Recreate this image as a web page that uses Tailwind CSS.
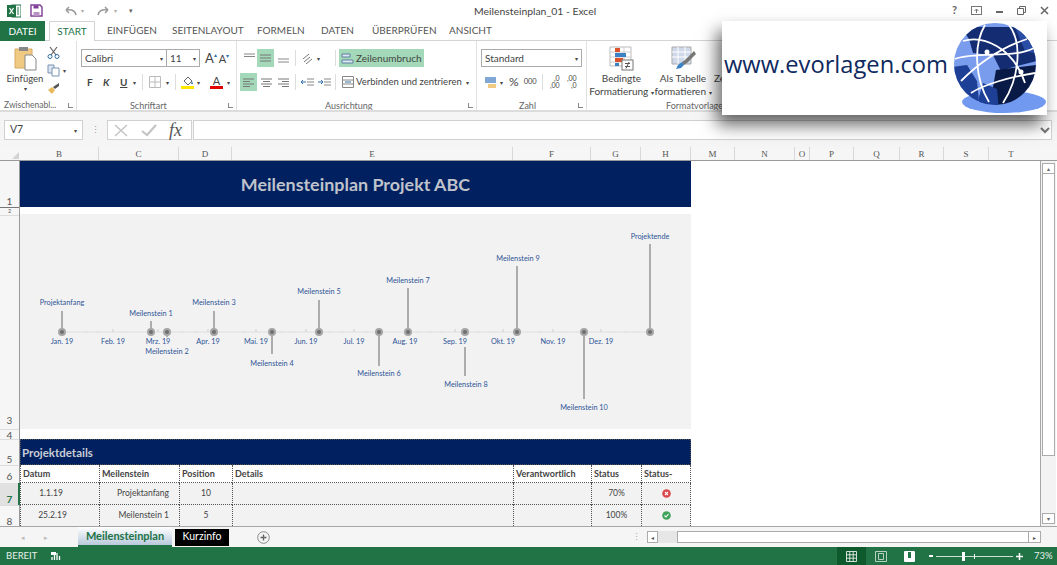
<!DOCTYPE html>
<html lang="de">
<head>
<meta charset="UTF-8">
<title>Meilensteinplan_01 - Excel</title>
<script src="https://cdn.jsdelivr.net/npm/@tailwindcss/browser@4"></script>
</head>
<body class="w-[1057px] h-[565px] overflow-hidden bg-white relative font-['Lato',sans-serif] text-[#444]">

<!-- Titelleiste -->
<div class="h-[21px] flex items-center pl-[7px] relative">
  <svg width="14" height="14" viewBox="0 0 14 14"><rect x="5" y="1" width="9" height="12" fill="#fff" stroke="#217346"/><path d="M8 3v8M11 3v8" stroke="#217346"/><rect y="1" width="9" height="12" fill="#217346"/><path d="M2.500 4l4 6M6.500 4l-4 6" stroke="#fff" stroke-width="1.300"/></svg>
  <svg class="ml-[9px]" width="13" height="13" viewBox="0 0 13 13"><path d="M1 1h9l2 2v9H1z" fill="#fff" stroke="#7d3c98" stroke-width="1.400"/><path d="M3.500 1.500h5v3h-5z" fill="#7d3c98"/><path d="M3.500 8h6v4h-6z" fill="#b894c6"/></svg>
  <svg class="ml-[21px]" width="13" height="12" viewBox="0 0 13 12"><path d="M12 10C11 5 7 4 2 5M2 5l3-3M2 5l3 3" fill="none" stroke="#9a9a9a" stroke-width="1.500"/></svg>
  <span class="ml-[4px] text-[6px] text-[#aaa]">▾</span>
  <svg class="ml-[13px]" width="13" height="12" viewBox="0 0 13 12"><path d="M1 10C2 5 6 4 11 5M11 5L8 2M11 5L8 8" fill="none" stroke="#9a9a9a" stroke-width="1.500"/></svg>
  <span class="ml-[4px] text-[6px] text-[#aaa]">▾</span>
  <span class="ml-[12px] text-[7px] text-[#666] leading-none">▾</span>
  <span class="absolute left-[474px] top-[5px] text-[10.400px] leading-[12px] text-[#444] whitespace-nowrap">Meilensteinplan_01 - Excel</span>
  <div class="ml-auto flex items-center gap-[14px] pr-[8px] text-[#666]">
    <span class="text-[11px] font-bold">?</span>
    <svg width="11" height="9" viewBox="0 0 11 9"><rect x=".5" y=".5" width="10" height="8" fill="none" stroke="#777"/><path d="M5.500 7V3M3.500 5l2-2 2 2" stroke="#777" fill="none"/></svg>
    <span class="w-[7px] h-[2px] bg-[#666] mt-[3px]"></span>
    <svg width="9" height="9" viewBox="0 0 9 9"><path d="M2.500 2.500V.5h6v6h-2M.5 2.500h6v6h-6z" fill="none" stroke="#666"/></svg>
    <svg width="9" height="9" viewBox="0 0 9 9"><path d="M1 1l7 7M8 1L1 8" stroke="#666" stroke-width="1.500"/></svg>
  </div>
</div>

<!-- Registerkarten -->
<div class="h-[20px] flex items-stretch text-[10px] border-b border-[#d4d4d4] whitespace-nowrap">
  <div class="w-[45px] h-[20px] bg-[#217346] text-white flex items-center justify-center">DATEI</div>
  <div class="ml-[4px] w-[46px] h-[20px] bg-white border border-b-0 border-[#d4d4d4] text-[#217346] flex items-center justify-center">START</div>
  <div class="flex items-center ml-[12px] text-[#555]">
    <span class="w-[65px]">EINFÜGEN</span>
    <span class="w-[85px]">SEITENLAYOUT</span>
    <span class="w-[64px]">FORMELN</span>
    <span class="w-[51px]">DATEN</span>
    <span class="w-[77px]">ÜBERPRÜFEN</span>
    <span>ANSICHT</span>
  </div>
</div>

<!-- Menüband -->
<div class="h-[71px] flex border-b-2 border-[#dcdcdc] text-[#444] overflow-hidden">
  <!-- Zwischenablage -->
  <div class="w-[77px] shrink-0 border-r border-[#e1e1e1] flex flex-col">
    <div class="h-[60px] flex">
      <div class="w-[46px] pl-[4px] flex flex-col items-center pt-[5px]">
        <svg width="23" height="25" viewBox="0 0 23 25"><path d="M1 3h17v19H1z" fill="#f0c982" stroke="#d8ac62"/><rect x="5" y="1" width="9" height="4" fill="#888"/><path d="M11 9h7l4 4v11H11z" fill="#fff" stroke="#888"/></svg>
        <span class="text-[9.500px] leading-[13px] mt-[1px]">Einfügen</span>
        <span class="text-[6px] leading-[8px]">▾</span>
      </div>
      <div class="flex flex-col gap-[5px] pt-[5px] pl-[1px]">
        <svg width="13" height="13" viewBox="0 0 13 13"><path d="M3 1l6 8M10 1L4 9" stroke="#666" stroke-width="1.200"/><circle cx="3" cy="10.500" r="2" fill="none" stroke="#2f6fa8"/><circle cx="10" cy="10.500" r="2" fill="none" stroke="#2f6fa8"/></svg>
        <div class="flex items-center gap-[3px]"><svg width="13" height="13" viewBox="0 0 13 13"><path d="M1 1h6v8H1z" fill="#dce6f2" stroke="#7a93b2"/><path d="M5 4h7v8H5z" fill="#fff" stroke="#7a93b2"/></svg><span class="text-[6px]">▾</span></div>
        <svg width="13" height="13" viewBox="0 0 13 13"><path d="M1 8l4 4 3-4-3-3z" fill="#e8b95a"/><path d="M6 5l6-4 0 3-4 3z" fill="#555"/></svg>
      </div>
    </div>
    <div class="flex items-center justify-between pl-[4px] pr-[3px] text-[8.500px] text-[#666] leading-[9px] whitespace-nowrap">Zwischenabl...<span class="w-[5px] h-[5px] border-l border-b border-[#888]"></span></div>
  </div>
  <!-- Schriftart -->
  <div class="w-[160px] shrink-0 border-r border-[#e1e1e1] flex flex-col pl-[4px]">
    <div class="h-[60px] flex flex-col">
      <div class="flex items-center mt-[8px] h-[18px]">
        <div class="w-[86px] h-[18px] border border-[#ababab] flex items-center justify-between px-[3px] text-[10px]">Calibri<span class="text-[6px]">▾</span></div>
        <div class="w-[33px] h-[18px] border border-l-0 border-[#ababab] flex items-center justify-between px-[3px] text-[10px]">11<span class="text-[6px]">▾</span></div>
        <span class="ml-[5px] text-[13px] leading-none">A<span class="text-[6px] align-top text-[#2f6fa8]">▴</span></span>
        <span class="ml-[2px] text-[11px] leading-none">A<span class="text-[6px] align-top text-[#2f6fa8]">▾</span></span>
      </div>
      <div class="flex items-center mt-[6px] h-[18px] text-[10px] font-bold">
        <span class="ml-[6px] w-[16px]">F</span>
        <span class="w-[17px] italic">K</span>
        <span class="w-[13px] underline">U</span>
        <span class="w-[9px] text-[6px] font-normal">▾</span>
        <span class="w-px h-[16px] bg-[#ddd]"></span>
        <svg class="ml-[6px]" width="12" height="12" viewBox="0 0 12 12"><path d="M.5.5h11v11H.5zM6 .5v11M.5 6h11" fill="none" stroke="#bbb"/></svg>
        <span class="ml-[5px] w-[9px] text-[6px] font-normal">▾</span>
        <span class="w-px h-[16px] bg-[#ddd]"></span>
        <div class="ml-[5px] flex flex-col items-center w-[13px]"><svg width="12" height="10" viewBox="0 0 12 10"><path d="M2 5l4-4 4 4-4 4z" fill="#fff" stroke="#666"/><path d="M10 5l1 3-2 0z" fill="#2f6fa8"/></svg><span class="w-[13px] h-[3px] bg-[#ffe600]"></span></div>
        <span class="ml-[3px] w-[13px] text-[6px] font-normal">▾</span>
        <div class="flex flex-col items-center w-[13px] leading-[11px]"><span class="text-[11px] font-normal">A</span><span class="w-[13px] h-[3px] bg-[#e00000]"></span></div>
        <span class="ml-[4px] text-[6px] font-normal">▾</span>
      </div>
    </div>
    <div class="flex items-center justify-between pr-[3px] text-[9px] text-[#666] leading-[9px]"><span class="ml-[49px]">Schriftart</span><span class="w-[5px] h-[5px] border-l border-b border-[#888]"></span></div>
  </div>
  <!-- Ausrichtung -->
  <div class="w-[240px] shrink-0 border-r border-[#e1e1e1] flex flex-col pl-[3px]">
    <div class="h-[60px] flex flex-col">
      <div class="flex items-center mt-[8px] h-[18px]">
        <svg class="ml-[3px] shrink-0" width="13" height="10" viewBox="0 0 13 10"><path d="M1 1h11M1 3.500h11" stroke="#888"/></svg>
        <div class="ml-[1px] w-[17px] h-[18px] bg-[#a3d9b8] flex items-center justify-center"><svg width="13" height="8" viewBox="0 0 13 8"><path d="M1 1h11M1 4h11M1 7h11" stroke="#777"/></svg></div>
        <svg class="ml-[3px]" width="13" height="14" viewBox="0 0 13 14"><path d="M1 8h11M1 11h11" stroke="#888"/></svg>
        <span class="ml-[5px] w-px h-[16px] bg-[#ddd]"></span>
        <svg class="ml-[5px]" width="13" height="13" viewBox="0 0 13 13"><path d="M2 7l6-5M3 10l6-5M5 12l6-5" stroke="#777"/></svg>
        <span class="ml-[3px] w-[6px] text-[6px]">▾</span>
        <span class="ml-[12px] w-px h-[16px] bg-[#ddd]"></span>
        <div class="ml-[3px] w-[85px] h-[18px] bg-[#a3d9b8] flex items-center pl-[2px] gap-[2px] text-[10px] whitespace-nowrap"><svg width="13" height="13" viewBox="0 0 13 13"><path d="M1 2h8v3H1zM1 8h11v3H1z" fill="#dbe9f4" stroke="#5f7fa0"/></svg>Zeilenumbruch</div>
      </div>
      <div class="flex items-center mt-[6px] h-[18px]">
        <div class="w-[17px] h-[18px] bg-[#a3d9b8] flex items-center justify-center"><svg width="13" height="9" viewBox="0 0 13 9"><path d="M1 1h11M1 3.500h7M1 6h11M1 8.500h7" stroke="#777"/></svg></div>
        <svg class="ml-[3px]" width="13" height="9" viewBox="0 0 13 9"><path d="M1 1h11M3 3.500h7M1 6h11M3 8.500h7" stroke="#777"/></svg>
        <svg class="ml-[4px]" width="13" height="9" viewBox="0 0 13 9"><path d="M1 1h11M5 3.500h7M1 6h11M5 8.500h7" stroke="#777"/></svg>
        <span class="ml-[5px] w-px h-[16px] bg-[#ddd]"></span>
        <svg class="ml-[5px]" width="13" height="9" viewBox="0 0 13 9"><path d="M6 1h7M6 4h7M6 7h7" stroke="#888"/><path d="M0 4h5M2 2L0 4l2 2" fill="none" stroke="#2f6fa8"/></svg>
        <svg class="ml-[4px]" width="13" height="9" viewBox="0 0 13 9"><path d="M6 1h7M6 4h7M6 7h7" stroke="#888"/><path d="M0 4h5M3 2l2 2-2 2" fill="none" stroke="#2f6fa8"/></svg>
        <span class="ml-[4px] w-px h-[16px] bg-[#ddd]"></span>
        <svg class="ml-[6px]" width="12" height="12" viewBox="0 0 12 12"><path d="M.5.5h11v11H.5zM.5 4h11M.5 8h11" fill="none" stroke="#888"/><path d="M3 6h6" stroke="#2f6fa8"/></svg>
        <span class="ml-[2px] w-[110px] text-[9.500px] whitespace-nowrap">Verbinden und zentrieren</span>
        <span class="text-[6px]">▾</span>
      </div>
    </div>
    <div class="flex items-center justify-between pr-[3px] text-[9px] text-[#666] leading-[9px]"><span class="ml-[85px]">Ausrichtung</span><span class="w-[5px] h-[5px] border-l border-b border-[#888]"></span></div>
  </div>
  <!-- Zahl -->
  <div class="w-[110px] shrink-0 border-r border-[#e1e1e1] flex flex-col pl-[4px]">
    <div class="h-[60px] flex flex-col">
      <div class="mt-[8px] w-[101px] h-[18px] border border-[#ababab] flex items-center justify-between px-[3px] text-[10px]">Standard<span class="text-[6px]">▾</span></div>
      <div class="flex items-center mt-[6px] h-[18px]">
        <svg class="ml-[3px]" width="13" height="13" viewBox="0 0 13 13"><rect x="1" y="1" width="11" height="6" fill="#7fa8d4"/><rect x="4" y="8" width="8" height="4" fill="#f0c982"/></svg>
        <span class="ml-[3px] text-[6px]">▾</span>
        <span class="ml-[6px] text-[12px] leading-none">%</span>
        <span class="ml-[5px] text-[7.500px]">000</span>
        <span class="ml-[5px] w-px h-[16px] bg-[#ddd]"></span>
        <span class="ml-[5px] text-[7px] leading-[7px] w-[12px] text-right">,0<br>,00</span>
        <span class="ml-[5px] text-[7px] leading-[7px] w-[12px] text-right">,00<br>,0</span>
      </div>
    </div>
    <div class="flex items-center justify-between pr-[3px] text-[9px] text-[#666] leading-[9px]"><span class="ml-[38px]">Zahl</span><span class="w-[5px] h-[5px] border-l border-b border-[#888]"></span></div>
  </div>
  <!-- Formatvorlagen -->
  <div class="flex-1 flex flex-col">
    <div class="h-[60px] flex text-[10px] leading-[12.500px] whitespace-nowrap">
      <div class="w-[69px] flex flex-col items-center pt-[5px]">
        <svg width="25" height="25" viewBox="0 0 25 25"><path d="M1 1h21v19H1z" fill="#fff" stroke="#bbb"/><path d="M1 6h21M1 11h21M1 16h21M8 1v19M15 1v19" stroke="#ccc"/><rect x="6" y="2" width="5" height="4" fill="#d9532c"/><rect x="6" y="7" width="11" height="4" fill="#3b82c4"/><rect x="6" y="12" width="8" height="4" fill="#d9532c"/><rect x="6" y="17" width="4" height="3" fill="#3b82c4"/><rect x="13" y="14" width="11" height="10" fill="#fff" stroke="#777"/><path d="M16 17.500h5M16 20.500h5M20 16l-3 6.500" stroke="#555"/></svg>
        <span class="mt-[1px]">Bedingte</span>
        <span>Formatierung <span class="text-[6px]">▾</span></span>
      </div>
      <div class="w-[54px] flex flex-col items-center pt-[5px]">
        <svg width="25" height="25" viewBox="0 0 25 25"><path d="M1 1h19v17H1z" fill="#cfd9ea" stroke="#aaa"/><path d="M1 6h19M1 11h19M7 1v17M14 1v17" stroke="#fff"/><path d="M23 5l-9 9-3 2 2 3 3-2 9-9z" fill="#777"/><path d="M11 16l-4 3-2 4 5-1 3-3z" fill="#3b82c4"/></svg>
        <span class="mt-[1px]">Als Tabelle</span>
        <span>formatieren <span class="text-[6px]">▾</span></span>
      </div>
      <div class="pl-[4px] pt-[31px]">Ze</div>
    </div>
    <div class="text-[9px] text-[#666] leading-[9px] pl-[79px] whitespace-nowrap">Formatvorlagen</div>
  </div>
</div>

<!-- Bearbeitungsleiste -->
<div class="h-[35px] bg-[#f5f5f5] pt-[8px]">
  <div class="h-[20px] flex items-stretch pl-[4px] pr-[5px]">
    <div class="w-[79px] border border-[#d0d0d0] bg-white flex items-center justify-between px-[5px] text-[10.500px]">V7<span class="text-[6px]">▾</span></div>
    <div class="w-[24px] flex items-center justify-center text-[#999] text-[9px]">⋮</div>
    <div class="w-[85px] border border-[#d0d0d0] bg-white flex items-center pl-[6px] gap-[13px]">
      <svg width="14" height="13" viewBox="0 0 14 13"><path d="M1 1l12 11M13 1L1 12" stroke="#c4c4c4" stroke-width="1.500"/></svg>
      <svg width="16" height="13" viewBox="0 0 16 13"><path d="M1 7l5 4 9-10" fill="none" stroke="#c4c4c4" stroke-width="2.200"/></svg>
      <span class="font-['Liberation_Serif',serif] italic text-[18px] text-[#555] leading-none -ml-[1px]">fx</span>
    </div>
    <div class="ml-[1px] flex-1 border border-[#d0d0d0] bg-white flex items-center justify-end pr-[1px]"><svg width="10" height="7" viewBox="0 0 10 7"><path d="M1 1l4 4 4-4" fill="none" stroke="#777" stroke-width="2"/></svg></div>
  </div>
</div>

<!-- Spaltenköpfe -->
<div class="h-[14px] flex bg-[#f6f6f6] border-b border-[#9a9a9a] font-['Liberation_Serif',serif] text-[9px] text-[#555] leading-[14px] text-center">
  <div class="w-[20px] flex justify-end items-end pr-[1px] pb-[1px]"><span class="w-0 h-0 border-l-[7px] border-l-transparent border-b-[7px] border-b-[#d4d4d4]"></span></div>
  <div class="w-[79px] border-r border-[#d8d8d8]">B</div>
  <div class="w-[80px] border-r border-[#d8d8d8]">C</div>
  <div class="w-[53px] border-r border-[#d8d8d8]">D</div>
  <div class="w-[281px] border-r border-[#d8d8d8]">E</div>
  <div class="w-[78px] border-r border-[#d8d8d8]">F</div>
  <div class="w-[50px] border-r border-[#d8d8d8]">G</div>
  <div class="w-[50px] border-r border-[#d8d8d8]">H</div>
  <div class="w-[44px] border-r border-[#d8d8d8]">M</div>
  <div class="w-[60px] border-r border-[#d8d8d8]">N</div>
  <div class="w-[15px] border-r border-[#d8d8d8]">O</div>
  <div class="w-[44px] border-r border-[#d8d8d8]">P</div>
  <div class="w-[46px] border-r border-[#d8d8d8]">Q</div>
  <div class="w-[44px] border-r border-[#d8d8d8]">R</div>
  <div class="w-[45px] border-r border-[#d8d8d8]">S</div>
  <div class="w-[44px]">T</div>
</div>

<!-- Tabellenblatt -->
<div class="h-[366px] flex border-b border-[#a6a6a6]">
  <!-- Zeilenköpfe -->
  <div class="w-[20px] shrink-0 bg-[#f6f6f6] border-r border-[#9a9a9a] text-[10px] text-[#555] text-center flex flex-col">
    <div class="h-[47px] flex items-end justify-center leading-[11px] border-b border-[#777]">1</div>
    <div class="h-[7px] leading-[7px] text-[5.500px]">2</div>
    <div class="h-[215px] flex items-end justify-center leading-[18px] border-t border-[#ddd]">3</div>
    <div class="h-[10px] flex items-center justify-center leading-none border-t border-[#ddd]">4</div>
    <div class="h-[26px] flex items-end justify-center leading-[12px] border-t border-[#ddd]">5</div>
    <div class="h-[18px] flex items-end justify-center leading-[14px] border-t border-[#ddd]">6</div>
    <div class="h-[22px] flex items-end justify-center leading-[12px] bg-[#e1e1e1] text-[#217346] font-bold relative after:absolute after:right-[-1px] after:top-0 after:bottom-0 after:w-[2px] after:bg-[#217346]">7</div>
    <div class="h-[21px] flex items-end justify-center leading-[10px] border-t border-[#ddd]">8</div>
  </div>

  <div class="w-[671px] shrink-0 flex flex-col">
    <div class="h-[47px] bg-[#002060] flex items-center justify-center text-[#bfc3cb] text-[17.900px] font-bold">Meilensteinplan Projekt ABC</div>
    <div class="h-[7px]"></div>
    <!-- Zeitstrahl -->
    <div class="h-[215px] bg-[#f2f2f2]">
      <svg width="671" height="215" viewBox="20 215 671 215" font-family="Lato, sans-serif" font-size="7.300" fill="#2f5597" text-anchor="middle">
        <path d="M62 333H650" stroke="#dedede" stroke-width="1.200"/>
        <path d="M113 330v3M158 330v3M208 330v3M256 330v3M306 330v3M354 330v3M405 330v3M455 330v3M503 330v3M553 330v3M601 330v3" stroke="#cfcfcf"/>
        <path d="M86 332v1M98 332v1M125 332v1M136 332v1M182 332v1M196 332v1M232 332v1M244 332v1M281 332v1M293 332v1M330 332v1M342 332v1M366 332v1M392 332v1M418 332v1M430 332v1M442 332v1M479 332v1M491 332v1M528 332v1M540 332v1M565 332v1M577 332v1M613 332v1M625 332v1M637 332v1" stroke="#d8d8d8"/>
        <g stroke="#7f7f7f" stroke-width="1.200">
          <path d="M62 312V333M151 322V333M167 333V338M214 312V333M272 333V355M319 301V333M379 333V367M408 289V333M465 348V377M517 267V333M584 333V400M650 245V333"/>
        </g>
        <g fill="#6f6f6f" stroke="#a6a6a6" stroke-width="2">
          <circle cx="62" cy="333" r="3"/><circle cx="151" cy="333" r="3"/><circle cx="167" cy="333" r="3"/><circle cx="214" cy="333" r="3"/><circle cx="272" cy="333" r="3"/><circle cx="319" cy="333" r="3"/><circle cx="379" cy="333" r="3"/><circle cx="408" cy="333" r="3"/><circle cx="465" cy="333" r="3"/><circle cx="517" cy="333" r="3"/><circle cx="584" cy="333" r="3"/><circle cx="650" cy="333" r="3"/>
        </g>
        <text x="62" y="345">Jan. 19</text><text x="113" y="345">Feb. 19</text><text x="158" y="345">Mrz. 19</text><text x="208" y="345">Apr. 19</text><text x="256" y="345">Mai. 19</text><text x="306" y="345">Jun. 19</text><text x="354" y="345">Jul. 19</text><text x="405" y="345">Aug. 19</text><text x="455" y="345">Sep. 19</text><text x="503" y="345">Okt. 19</text><text x="553" y="345">Nov. 19</text><text x="601" y="345">Dez. 19</text>
        <text x="62" y="306">Projektanfang</text><text x="151" y="317">Meilenstein 1</text><text x="167" y="355">Meilenstein 2</text><text x="214" y="306">Meilenstein 3</text><text x="272" y="367">Meilenstein 4</text><text x="319" y="295">Meilenstein 5</text><text x="379" y="377">Meilenstein 6</text><text x="408" y="284">Meilenstein 7</text><text x="466" y="388">Meilenstein 8</text><text x="518" y="262">Meilenstein 9</text><text x="584" y="411">Meilenstein 10</text><text x="650" y="240">Projektende</text>
      </svg>
    </div>
    <div class="h-[10px]"></div>
    <div class="h-[26px] bg-[#002060] border border-dotted border-[#555] flex items-end pl-[1px] pb-[3px] text-[#c9cdd6] text-[11.500px] font-bold">Projektdetails</div>
    <!-- Tabelle -->
    <div class="grid grid-cols-[79px_80px_53px_281px_78px_50px_50px] grid-rows-[18px_22px_21px] text-[8.500px] text-[#444]">
      <div class="border-l border-b border-dotted border-[#555] pl-[2px] font-bold text-[9px] leading-[17px]">Datum</div>
      <div class="border-l border-b border-dotted border-[#555] pl-[2px] font-bold text-[9px] leading-[17px]">Meilenstein</div>
      <div class="border-l border-b border-dotted border-[#555] pl-[2px] font-bold text-[9px] leading-[17px]">Position</div>
      <div class="border-l border-b border-dotted border-[#555] pl-[2px] font-bold text-[9px] leading-[17px]">Details</div>
      <div class="border-l border-b border-dotted border-[#555] pl-[2px] font-bold text-[9px] leading-[17px]">Verantwortlich</div>
      <div class="border-l border-b border-dotted border-[#555] pl-[2px] font-bold text-[9px] leading-[17px]">Status</div>
      <div class="border-x border-b border-dotted border-[#555] pl-[2px] font-bold text-[9px] leading-[17px]">Status-</div>

      <div class="bg-[#f2f2f2] border-l border-b border-dotted border-[#555] flex items-center justify-center pr-[18px]">1.1.19</div>
      <div class="bg-[#f2f2f2] border-l border-b border-dotted border-[#555] flex items-center justify-end pr-[10px]">Projektanfang</div>
      <div class="bg-[#f2f2f2] border-l border-b border-dotted border-[#555] flex items-center justify-center">10</div>
      <div class="bg-[#f2f2f2] border-l border-b border-dotted border-[#555]"></div>
      <div class="bg-[#f2f2f2] border-l border-b border-dotted border-[#555]"></div>
      <div class="bg-[#f2f2f2] border-l border-b border-dotted border-[#555] flex items-center justify-center">70%</div>
      <div class="bg-[#f2f2f2] border-x border-b border-dotted border-[#555] flex items-center justify-center"><svg width="9" height="9" viewBox="0 0 9 9"><circle cx="4.500" cy="4.500" r="4.300" fill="#d9484c"/><path d="M3 3l3 3M6 3L3 6" stroke="#fff" stroke-width="1.100"/></svg></div>

      <div class="bg-[#f2f2f2] border-l border-dotted border-[#555] flex items-center justify-center pr-[15px]">25.2.19</div>
      <div class="bg-[#f2f2f2] border-l border-dotted border-[#555] flex items-center justify-end pr-[10px]">Meilenstein 1</div>
      <div class="bg-[#f2f2f2] border-l border-dotted border-[#555] flex items-center justify-center">5</div>
      <div class="bg-[#f2f2f2] border-l border-dotted border-[#555]"></div>
      <div class="bg-[#f2f2f2] border-l border-dotted border-[#555]"></div>
      <div class="bg-[#f2f2f2] border-l border-dotted border-[#555] flex items-center justify-center">100%</div>
      <div class="bg-[#f2f2f2] border-x border-dotted border-[#555] flex items-center justify-center"><svg width="9" height="9" viewBox="0 0 9 9"><circle cx="4.500" cy="4.500" r="4.300" fill="#3fa35a"/><path d="M2.500 4.500l1.500 1.500 2.500-3" fill="none" stroke="#fff" stroke-width="1.100"/></svg></div>
    </div>
  </div>

  <div class="w-[350px] shrink-0 border-r border-[#a6a6a6]"></div>
  <!-- Bildlaufleiste -->
  <div class="w-[15px] bg-[#f3f3f3] flex flex-col items-center pt-[2px] pb-[2px]">
    <div class="w-[13px] h-[11px] border border-[#ababab] bg-white flex items-center justify-center text-[6px] text-[#666]">▴</div>
    <div class="w-[13px] h-[283px] border border-[#ababab] bg-white -mt-px"></div>
    <div class="flex-1"></div>
    <div class="w-[13px] h-[11px] border border-[#ababab] bg-white flex items-center justify-center text-[6px] text-[#666]">▾</div>
  </div>
</div>

<!-- Blattregister -->
<div class="h-[20px] flex items-center bg-[#f5f5f5]">
  <span class="ml-[21px] w-[6px] shrink-0 text-[7px] text-[#bbb]">◂</span>
  <span class="ml-[17px] w-[6px] shrink-0 text-[7px] text-[#bbb]">▸</span>
  <div class="ml-[28px] w-[94px] shrink-0 h-[20px] bg-gradient-to-b from-white to-[#b9c9dc] border-b-2 border-[#217346] text-[#217346] text-[11px] font-bold flex items-center justify-center whitespace-nowrap">Meilensteinplan</div>
  <div class="ml-[3px] w-[54px] shrink-0 h-[17px] bg-black text-white text-[10.500px] flex items-center justify-center">Kurzinfo</div>
  <svg class="ml-[28px] shrink-0" width="13" height="13" viewBox="0 0 13 13"><circle cx="6.500" cy="6.500" r="5.800" fill="none" stroke="#888"/><path d="M6.500 3.500v6M3.500 6.500h6" stroke="#666" stroke-width="1.400"/></svg>
  <span class="ml-[362px] w-[4px] shrink-0 text-[9px] text-[#aaa]">⋮</span>
  <div class="ml-[11px] w-[11px] shrink-0 h-[12px] border border-[#ababab] bg-white flex items-center justify-center text-[6px] text-[#555]">◂</div>
  <div class="w-[19px] shrink-0 h-[12px] bg-[#e6e6e6]"></div>
  <div class="w-[352px] shrink-0 h-[12px] border border-[#ababab] bg-white"></div>
  <div class="w-[12px] shrink-0 h-[12px] border border-l-0 border-[#ababab] bg-white flex items-center justify-center text-[6px] text-[#555]">▸</div>
</div>

<!-- Statusleiste -->
<div class="h-[18px] bg-[#217346] text-[#e8f0ea] text-[9.500px] flex items-center pl-[6px]">
  BEREIT
  <svg class="ml-[14px]" width="10" height="10" viewBox="0 0 10 10"><path d="M0 1h5v3H0z" fill="#fff"/><path d="M1 9V6M3.500 9V4M6 9V2M8.500 9V5" stroke="#fff" stroke-width="1.300"/></svg>
  <div class="ml-auto flex items-center h-full">
    <div class="w-[29px] h-full bg-[#0f5a2d] flex items-center justify-center"><svg width="11" height="11" viewBox="0 0 11 11"><path d="M.5.500h10v10H.5zM3.800.500v10M7.200.500v10M.5 3.800h10M.5 7.200h10" fill="none" stroke="#fff" stroke-width=".8"/></svg></div>
    <svg class="ml-[9px]" width="12" height="11" viewBox="0 0 12 11"><path d="M.5.500h11v10H.5z" fill="none" stroke="#b7d0c0"/><path d="M3.500 2.500h5v6h-5z" fill="none" stroke="#b7d0c0"/></svg>
    <svg class="ml-[17px]" width="11" height="11" viewBox="0 0 11 11"><path d="M.5.500h10v10H.5z" fill="none" stroke="#fff"/><path d="M1 1h3v6h3V1h3v9H1z" fill="#fff"/></svg>
    <span class="ml-[14px] w-[4px] h-[2px] bg-white"></span>
    <div class="ml-[3px] w-[77px] h-px bg-[#d0e0d6] relative"><span class="absolute left-[26px] top-[-4px] w-[3px] h-[9px] bg-white"></span><span class="absolute left-[38px] top-[-2px] w-px h-[5px] bg-white"></span></div>
    <svg class="ml-[3px]" width="7" height="7" viewBox="0 0 7 7"><path d="M3.500 0v7M0 3.500h7" stroke="#fff" stroke-width="1.500"/></svg>
    <span class="ml-[11px] mr-[5px] w-[18px]">73%</span>
  </div>
</div>

<!-- Logo-Overlay -->
<div class="absolute left-[722px] top-[21px] w-[325px] h-[94px] bg-white shadow-[-5px_10px_16px_rgba(0,0,0,0.6)] flex items-center pl-[2px]">
  <span class="font-['Open_Sans',sans-serif] text-[23.700px] text-[#0f2a60] whitespace-nowrap -mt-[6px]">www.evorlagen.com</span>
  <svg class="absolute left-[231px] top-0" width="94" height="94" viewBox="0 0 94 94">
    <defs><clipPath id="globus"><circle cx="42" cy="43" r="41"/></clipPath></defs>
    <ellipse cx="51" cy="81" rx="42" ry="11" fill="#7299f0"/>
    <g clip-path="url(#globus)">
      <rect width="94" height="94" fill="#7a9cec"/>
      <path d="M8 6H84V40L60 46 48 50 40 34 20 32 16 18z" fill="#132c72"/>
      <path d="M62 6H90V34L72 30z" fill="#2a4ea6"/>
      <path d="M43 49L84 44V90H44L40 66z" fill="#0a1a46"/>
      <path d="M0 46L14 44 24 60 26 80 0 80z" fill="#1d3f96"/>
      <path d="M26 76L30 62 44 68 46 90H26z" fill="#1d3f96"/>
    </g>
    <path d="M10 20C30 14 60 26 72 62M2 38C24 30 60 38 81 27M8 60C26 42 50 26 74 18M32 4C20 24 22 58 36 81M56 4C70 22 66 58 50 82M18 72C30 64 56 56 82 52" fill="none" stroke="#fff" stroke-width="1.800"/>
    <circle cx="34" cy="31" r="2.500" fill="#fff"/><circle cx="68" cy="51" r="2.500" fill="#fff"/>
  </svg>
</div>
</body>
</html>
